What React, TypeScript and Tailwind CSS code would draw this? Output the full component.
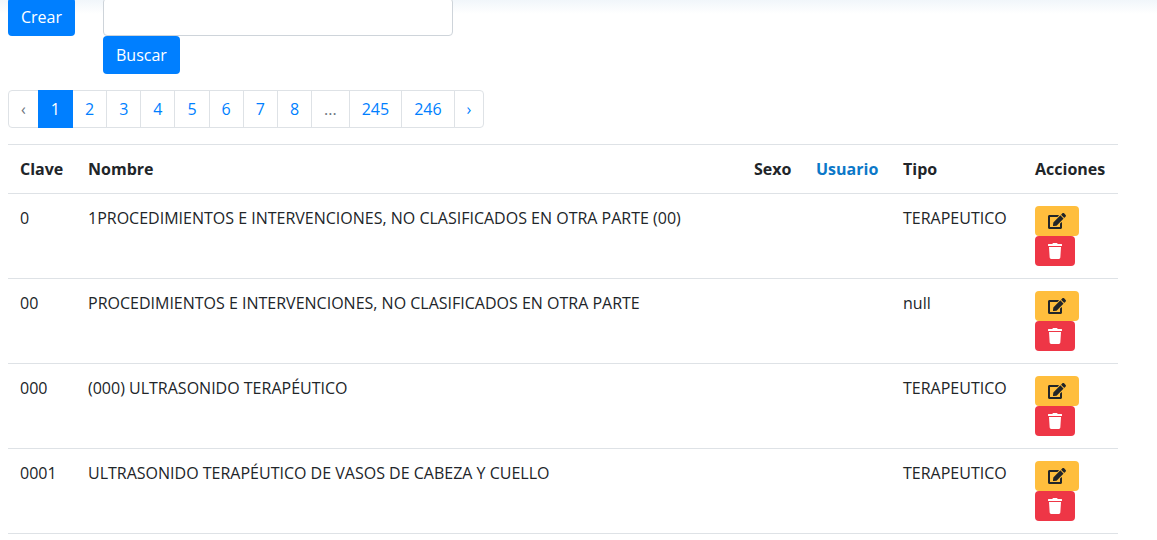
import { FaEdit, FaTrash } from "react-icons/fa"
import { cx } from "class-variance-authority"

interface Procedimiento {
  clave: string
  nombre: string
  sexo: string
  usuario: string
  tipo: string
}

const procedimientos: Procedimiento[] = [
  {
    clave: "0",
    nombre: "1PROCEDIMIENTOS E INTERVENCIONES, NO CLASIFICADOS EN OTRA PARTE (00)",
    sexo: "",
    usuario: "",
    tipo: "TERAPEUTICO",
  },
  {
    clave: "00",
    nombre: "PROCEDIMIENTOS E INTERVENCIONES, NO CLASIFICADOS EN OTRA PARTE",
    sexo: "",
    usuario: "",
    tipo: "null",
  },
  { clave: "000", nombre: "(000) ULTRASONIDO TERAPÉUTICO", sexo: "", usuario: "", tipo: "TERAPEUTICO" },
  {
    clave: "0001",
    nombre: "ULTRASONIDO TERAPÉUTICO DE VASOS DE CABEZA Y CUELLO",
    sexo: "",
    usuario: "",
    tipo: "TERAPEUTICO",
  },
]

const pages = ["‹", "1", "2", "3", "4", "5", "6", "7", "8", "...", "245", "246", "›"]

function Toolbar() {
  return (
    <div className="flex items-start gap-7">
      <button type="button" className="h-[38px] rounded bg-[#007fff] px-[13px] text-white">
        Crear
      </button>
      <form className="flex w-[350px] flex-col items-start" onSubmit={(e) => e.preventDefault()}>
        <input
          type="text"
          aria-label="Buscar procedimiento"
          className="h-[38px] w-full rounded border border-[#ced4da] bg-white px-3"
        />
        <button type="submit" className="h-[38px] rounded bg-[#007fff] px-[13px] text-white">
          Buscar
        </button>
      </form>
    </div>
  )
}

function Pagination() {
  return (
    <nav aria-label="Paginación" className="mt-4">
      <ul className="flex">
        {pages.map((page, i) => {
          const active = page === "1"
          const disabled = page === "‹" || page === "..."
          const className = cx(
            "block border px-3 py-[6px]",
            i > 0 && "-ml-px",
            i === 0 && "rounded-l",
            i === pages.length - 1 && "rounded-r",
            active && "relative border-[#007fff] bg-[#007fff] text-white",
            !active && "border-[#dee2e6] bg-white",
            disabled && "text-[#6c757d]",
            !active && !disabled && "text-[#007fff]"
          )
          return (
            <li key={page}>
              {active || disabled ? (
                <span className={className}>{page}</span>
              ) : (
                <a href="#" className={className}>
                  {page}
                </a>
              )}
            </li>
          )
        })}
      </ul>
    </nav>
  )
}

export default function App() {
  return (
    <div className="-mt-0.5 bg-linear-to-b from-[#eff5fa] to-white to-[16px] pr-[39px] pl-2 font-['Open_Sans',sans-serif] text-base text-[#212529]">
      <Toolbar />
      <Pagination />
      <table className="mt-4 w-full table-fixed border-collapse text-left">
        <thead>
          <tr className="border-y border-[#dee2e6]">
            <th className="w-[68px] p-3">Clave</th>
            <th className="p-3">Nombre</th>
            <th className="w-[62px] p-3">Sexo</th>
            <th className="w-[87px] p-3">
              <a href="#" className="text-[#0b78c8]">
                Usuario
              </a>
            </th>
            <th className="w-[132px] p-3">Tipo</th>
            <th className="w-[95px] p-3">Acciones</th>
          </tr>
        </thead>
        <tbody>
          {procedimientos.map((p) => (
            <tr key={p.clave} className="border-b border-[#dee2e6] align-top">
              <td className="p-3">{p.clave}</td>
              <td className="p-3">{p.nombre}</td>
              <td className="p-3">{p.sexo}</td>
              <td className="p-3">{p.usuario}</td>
              <td className="p-3">{p.tipo}</td>
              <td className="p-3">
                <div className="flex flex-col items-start">
                  <button type="button" aria-label="Editar" className="h-[30px] rounded bg-[#ffbe3d] px-[13px]">
                    <FaEdit className="h-4 w-[18px]" />
                  </button>
                  <button
                    type="button"
                    aria-label="Eliminar"
                    className="h-[30px] rounded bg-[#ee3646] px-[13px] text-white"
                  >
                    <FaTrash className="h-4 w-[14px]" />
                  </button>
                </div>
              </td>
            </tr>
          ))}
        </tbody>
      </table>
    </div>
  )
}
